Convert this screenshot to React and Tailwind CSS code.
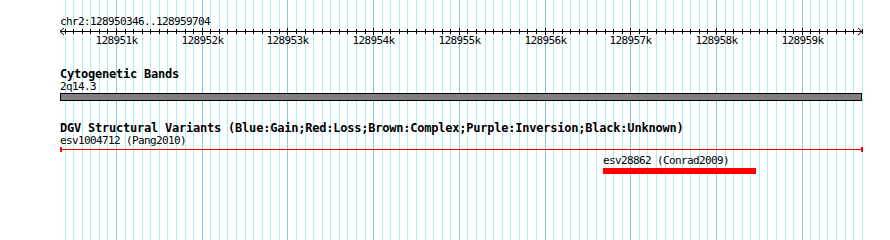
import React from 'react';

const START = 128950346;
const END = 128959704;
const LEFT = 60;
const WIDTH = 802;

const toX = (pos) => LEFT + ((pos - START) * WIDTH) / (END - START);

const ticks = [];
for (let pos = 128950400; pos <= 128959700; pos += 100) {
  ticks.push({ pos, x: Math.round(toX(pos)) + 0.5, major: pos % 1000 === 0 });
}

function Grid() {
  return (
    <svg className="absolute inset-0 pointer-events-none" width="890" height="240" shapeRendering="crispEdges">
      {ticks.map((t) => (
        <line key={t.pos} x1={t.x} x2={t.x} y1="0" y2="240" stroke={t.major ? '#84c8ec' : '#aeeef0'} strokeWidth="1" />
      ))}
    </svg>
  );
}

function Ruler() {
  return (
    <svg width="890" height="17" className="mt-[1px] overflow-visible" shapeRendering="crispEdges">
      <line x1={LEFT} x2={LEFT + WIDTH} y1="2.5" y2="2.5" stroke="#000" />
      <polyline points={`${LEFT + 4},-1 ${LEFT},2.5 ${LEFT + 4},6`} fill="none" stroke="#000" shapeRendering="auto" />
      <polyline
        points={`${LEFT + WIDTH - 4},-1 ${LEFT + WIDTH},2.5 ${LEFT + WIDTH - 4},6`}
        fill="none"
        stroke="#000"
        shapeRendering="auto"
      />
      {ticks.map((t) => (
        <line key={t.pos} x1={t.x} x2={t.x} y1={t.major ? -1 : 0} y2={t.major ? 6 : 5} stroke="#000" />
      ))}
      {ticks
        .filter((t) => t.major)
        .map((t) => (
          <text
            key={t.pos}
            x={t.x}
            y="15"
            textAnchor="middle"
            fontSize="11"
            letterSpacing="-0.62"
            fontFamily="'DejaVu Sans Mono', monospace"
            fill="#000"
          >
            {t.pos / 1000}k
          </text>
        ))}
    </svg>
  );
}

export default function App() {
  return (
    <div className="relative w-[890px] h-[240px] overflow-hidden bg-white text-black font-['DejaVu_Sans_Mono',monospace]">
      <Grid />
      <div className="relative flex flex-col">
        {/* ruler */}
        <div className="pt-[16px] pl-[60px] text-[11px] leading-[12px] tracking-[-0.62px]">chr2:128950346..128959704</div>
        <Ruler />

        {/* cytobands */}
        <div className="mt-[21px] pl-[60px] font-bold text-[12px] leading-[14px] tracking-[-0.22px]">Cytogenetic Bands</div>
        <div className="pl-[60px] text-[11px] leading-[12px] tracking-[-0.62px]">2q14.3</div>
        <div className="ml-[60px] w-[802px] h-[8px] bg-[#808080] border border-black"></div>

        {/* DGV track */}
        <div className="mt-[20px] pl-[60px] font-bold text-[12px] leading-[14px] tracking-[-0.22px] whitespace-nowrap">
          DGV Structural Variants (Blue:Gain;Red:Loss;Brown:Complex;Purple:Inversion;Black:Unknown)
        </div>
        <div className="pl-[60px] text-[11px] leading-[12px] tracking-[-0.62px]">esv1004712 (Pang2010)</div>
        <div className="ml-[60px] w-[803px] h-[5px] flex items-center">
          <div className="w-[2px] h-[5px] bg-[#ff0000]"></div>
          <div className="flex-1 h-[1px] bg-[#ff0000]"></div>
          <div className="w-[2px] h-[5px] bg-[#ff0000]"></div>
        </div>
        <div className="mt-[3px] pl-[603px] text-[11px] leading-[12px] tracking-[-0.62px]">esv28862 (Conrad2009)</div>
        <div className="mt-[1px] ml-[603px] w-[153px] h-[6px] bg-[#ff0000]"></div>
      </div>
    </div>
  );
}
